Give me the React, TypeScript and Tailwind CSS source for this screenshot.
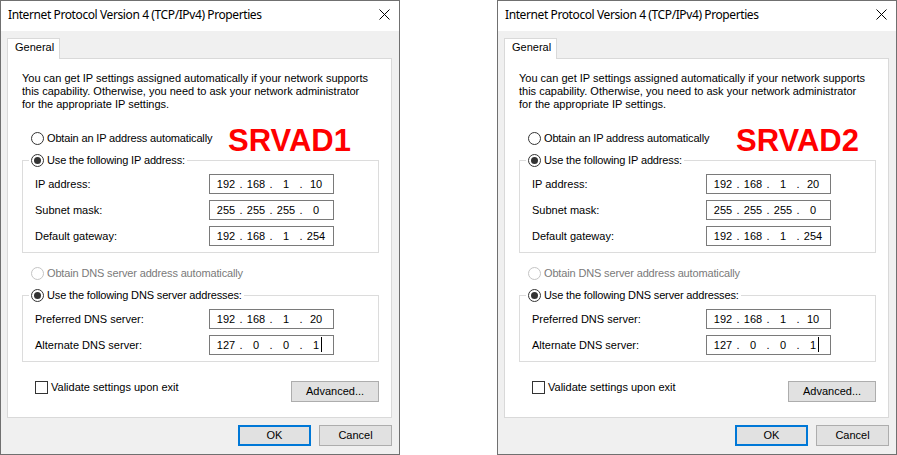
import React from "react";

type DialogProps = {
  tag: string;
  tagLeft: number;
  ip: string[];
  mask: string[];
  gateway: string[];
  dns1: string[];
  dns2: string[];
};

function Radio({ checked, disabled }: { checked?: boolean; disabled?: boolean }) {
  return (
    <span
      className={`w-[13px] h-[13px] rounded-full border bg-white flex items-center justify-center shrink-0 ${
        disabled ? "border-[#c4c4c4]" : "border-[#333333]"
      }`}
    >
      {checked && <span className="w-[7px] h-[7px] rounded-full bg-[#333333]" />}
    </span>
  );
}

function RadioRow({
  label,
  checked,
  disabled,
}: {
  label: string;
  checked?: boolean;
  disabled?: boolean;
}) {
  return (
    <div className="flex items-center gap-[3px] h-[13px]">
      <Radio checked={checked} disabled={disabled} />
      <span
        className={`leading-[13px] tracking-[-0.15px] whitespace-nowrap ${
          disabled ? "text-[#7a7a7a]" : "text-black"
        }`}
      >
        {label}
      </span>
    </div>
  );
}

function IpBox({ parts, caret }: { parts: string[]; caret?: boolean }) {
  return (
    <div className="w-[125px] h-[20px] border border-[#7a7a7a] bg-white flex items-center pl-[4px]">
      {parts.map((p, i) => (
        <React.Fragment key={i}>
          {i > 0 && <span className="w-[6px] text-center leading-[13px]">.</span>}
          <span className="w-[24px] text-center leading-[13px] relative">
            {p}
            {caret && i === 3 && (
              <span className="absolute left-[17px] top-[-2px] w-px h-[15px] bg-black" />
            )}
          </span>
        </React.Fragment>
      ))}
    </div>
  );
}

function FieldRow({ label, parts, caret }: { label: string; parts: string[]; caret?: boolean }) {
  return (
    <div className="flex items-center h-[20px]">
      <span className="w-[174px] leading-[13px] whitespace-nowrap">{label}</span>
      <IpBox parts={parts} caret={caret} />
    </div>
  );
}

function GroupBox({ legend, children }: { legend: string; children: React.ReactNode }) {
  return (
    <fieldset className="border border-[#dcdcdc] w-[357px] pt-[7px] pb-[6px] mt-[9px]">
      <legend className="ml-[6px] px-[2px]">
        <RadioRow label={legend} checked />
      </legend>
      <div className="pl-[12px] flex flex-col gap-[6px]">{children}</div>
    </fieldset>
  );
}

function PushButton({
  label,
  width,
  primary,
}: {
  label: string;
  width: string;
  primary?: boolean;
}) {
  return (
    <div
      className={`${width} h-[21px] bg-[#e1e1e1] flex items-center justify-center leading-[13px] ${
        primary ? "border-2 border-[#0078d7]" : "border border-[#adadad]"
      }`}
    >
      {label}
    </div>
  );
}

function Dialog({ tag, tagLeft, ip, mask, gateway, dns1, dns2 }: DialogProps) {
  return (
    <div className="relative w-[400px] h-[455px] shrink-0 border border-[#707070] bg-[#f0f0f0] flex flex-col text-[11px] text-black font-['Liberation_Sans',Arial,sans-serif]">
      {/* caption bar */}
      <div className="h-[30px] bg-white flex items-start justify-between pl-[7px] pr-[9px]">
        <span className="mt-[6px] text-[12px] leading-[16px] tracking-[-0.4px] font-['Noto_Sans',sans-serif] whitespace-nowrap">
          Internet Protocol Version 4 (TCP/IPv4) Properties
        </span>
        <svg width="11" height="11" viewBox="0 0 11 11" className="mt-[8px]">
          <path d="M0.5 0.5 L10.5 10.5 M10.5 0.5 L0.5 10.5" stroke="#000" strokeWidth="1" fill="none" />
        </svg>
      </div>

      <div className="pt-[7px] pl-[6px] flex flex-col">
        {/* tab strip */}
        <div className="relative z-10 -mb-px w-[53px] h-[21px] bg-white border-t border-x border-[#d9d9d9] pl-[7px] pt-[2px] leading-[13px]">
          General
        </div>

        {/* tab page */}
        <div className="w-[385px] h-[360px] bg-white border border-[#d9d9d9] pt-[13px] pl-[14px] flex flex-col">
          <p className="leading-[13px] whitespace-nowrap">
            You can get IP settings assigned automatically if your network supports
            <br />
            this capability. Otherwise, you need to ask your network administrator
            <br />
            for the appropriate IP settings.
          </p>

          <div className="mt-[21px] pl-[9px]">
            <RadioRow label="Obtain an IP address automatically" />
          </div>

          <GroupBox legend="Use the following IP address:">
            <FieldRow label="IP address:" parts={ip} />
            <FieldRow label="Subnet mask:" parts={mask} />
            <FieldRow label="Default gateway:" parts={gateway} />
          </GroupBox>

          <div className="mt-[14px] pl-[9px]">
            <RadioRow label="Obtain DNS server address automatically" disabled />
          </div>

          <GroupBox legend="Use the following DNS server addresses:">
            <FieldRow label="Preferred DNS server:" parts={dns1} />
            <FieldRow label="Alternate DNS server:" parts={dns2} caret />
          </GroupBox>

          <div className="mt-[19px] w-[357px] pl-[13px] flex items-start justify-between">
            <div className="flex items-center gap-[3px] h-[13px]">
              <span className="w-[13px] h-[13px] border border-[#333333] bg-white shrink-0" />
              <span className="leading-[13px] whitespace-nowrap">Validate settings upon exit</span>
            </div>
            <PushButton label="Advanced..." width="w-[88px]" />
          </div>
        </div>

        {/* dialog buttons */}
        <div className="mt-[7px] w-[385px] flex justify-end gap-[8px]">
          <PushButton label="OK" width="w-[73px]" primary />
          <PushButton label="Cancel" width="w-[73px]" />
        </div>
      </div>

      {/* server name annotation */}
      <span
        className="absolute top-[124px] text-[31px] leading-[31px] font-bold text-[#ff0000] font-['Liberation_Sans',Arial,sans-serif] whitespace-nowrap"
        style={{ left: tagLeft }}
      >
        {tag}
      </span>
    </div>
  );
}

export default function App() {
  return (
    <div className="w-[897px] h-[455px] bg-white flex overflow-hidden">
      <Dialog
        tag="SRVAD1"
        tagLeft={227}
        ip={["192", "168", "1", "10"]}
        mask={["255", "255", "255", "0"]}
        gateway={["192", "168", "1", "254"]}
        dns1={["192", "168", "1", "20"]}
        dns2={["127", "0", "0", "1"]}
      />
      <div className="w-[97px] shrink-0" />
      <Dialog
        tag="SRVAD2"
        tagLeft={238}
        ip={["192", "168", "1", "20"]}
        mask={["255", "255", "255", "0"]}
        gateway={["192", "168", "1", "254"]}
        dns1={["192", "168", "1", "10"]}
        dns2={["127", "0", "0", "1"]}
      />
    </div>
  );
}
